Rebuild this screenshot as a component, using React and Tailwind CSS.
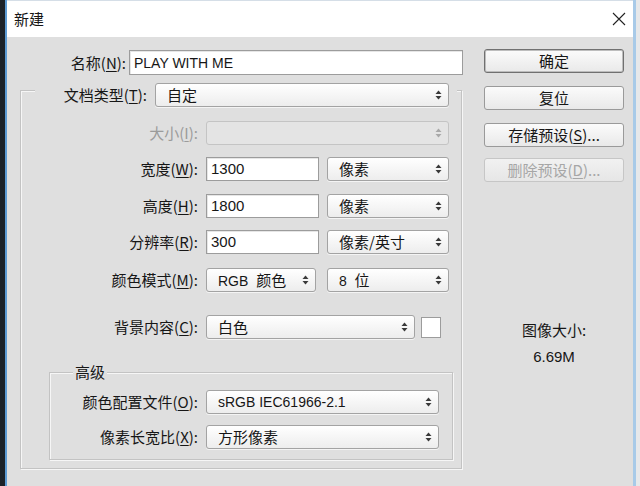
import React from "react";

const BG = "bg-[#dfdfdf]";

function Arrows({ disabled }) {
  const c = disabled ? "#a8a8a8" : "#3a3a3a";
  return (
    <svg width="7" height="10" viewBox="0 0 7 10" className="shrink-0">
      <path d="M3.5 0.5 L6.5 4 L0.5 4 Z" fill={c} />
      <path d="M3.5 9.5 L6.5 6 L0.5 6 Z" fill={c} />
    </svg>
  );
}

function C({ children }) {
  return (
    <span className="font-['Noto_Sans_CJK_SC',sans-serif] text-[15px] leading-[18px]">{children}</span>
  );
}

function Select({ className, children, disabled }) {
  return (
    <div
      className={
        "flex h-[24px] items-center justify-between rounded-[3px] border pl-[11px] pr-[6px] " +
        (disabled
          ? "border-[#c4c4c4] bg-[#e4e4e4] "
          : "border-[#a3a3a3] bg-gradient-to-b from-white to-[#ededed] shadow-[0_1px_0_#f4f4f4] ") +
        className
      }
    >
      <span className="whitespace-nowrap leading-[18px]">{children}</span>
      <Arrows disabled={disabled} />
    </div>
  );
}

function Input({ className, children }) {
  return (
    <div
      className={
        "flex h-[24px] items-center border border-[#9c9c9c] bg-white pl-[4px] shadow-[inset_1px_1px_0_#e6e6e6] " +
        className
      }
    >
      <span className="leading-[18px]">{children}</span>
    </div>
  );
}

function M({ c }) {
  return <span className="underline underline-offset-2 decoration-1">{c}</span>;
}

function Label({ className, cn, m, muted }) {
  return (
    <span
      className={
        "whitespace-nowrap text-right font-['Noto_Sans_CJK_SC',sans-serif] text-[15px] leading-[18px] " +
        (muted ? "text-[#9b9b9b] " : "") +
        className
      }
    >
      {cn}(<M c={m} />):
    </span>
  );
}

function Btn({ children, primary, disabled, className }) {
  return (
    <div
      className={
        "flex h-[24px] w-[140px] items-center justify-center rounded-[3px] font-['Noto_Sans_CJK_SC',sans-serif] text-[15px] " +
        (primary
          ? "border border-[#707070] bg-gradient-to-b from-[#fbfbfb] to-[#e9e9e9] shadow-[inset_0_0_0_1px_#bdbdbd] "
          : disabled
          ? "border border-[#c6c6c6] bg-gradient-to-b from-[#f1f1f1] to-[#e6e6e6] text-[#a6a6a6] "
          : "border border-[#9a9a9a] bg-gradient-to-b from-[#fbfbfb] to-[#e9e9e9] ") +
        className
      }
    >
      <span className="whitespace-nowrap leading-[18px]">{children}</span>
    </div>
  );
}

export default function App() {
  return (
    <div className="flex h-[486px] w-[640px] overflow-hidden font-['Liberation_Sans','Noto_Sans_CJK_SC',sans-serif] text-[14px] text-[#161616]">
      <div className="w-[5px] bg-[#1c2229]" />
      <div className={"flex w-[631px] flex-col border-l-2 border-r-[3px] border-l-[#5d9bd4] border-r-[#a8cae8] " + BG}>
        {/* title bar */}
        <div className="flex h-[37px] items-center justify-between border-t border-t-[#d5dee7] bg-white pl-[7px] pr-[7px]">
          <C>新建</C>
          <svg width="14" height="14" viewBox="0 0 14 14">
            <path d="M1 1 L13 13 M13 1 L1 13" stroke="#222" strokeWidth="1.1" />
          </svg>
        </div>

        {/* body */}
        <div className="flex flex-1">
          {/* left column */}
          <div className="flex w-[477px] flex-col">
            <div className="mt-[13px] flex h-[25px] items-center">
              <Label className="w-[119px]" cn="名称" m="N" />
              <Input className="ml-[3px] h-[25px] w-[334px]">PLAY WITH ME</Input>
            </div>

            {/* outer group */}
            <div className="ml-[13px] mt-[15px] flex w-[442px] flex-col border border-[#c3c3c3] pb-[8px] shadow-[inset_1px_1px_0_#f6f6f6,1px_1px_0_#f6f6f6]">
              <div className={"-mt-[8px] ml-[14px] flex h-[24px] w-[422px] items-center pr-[8px] " + BG}>
                <Label className="w-[112px]" cn="文档类型" m="T" />
                <Select className="ml-[8px] w-[294px]">
                  <C>自定</C>
                </Select>
              </div>

              <div className="mt-[14px] flex h-[24px] items-center">
                <Label className="w-[177px]" cn="大小" m="I" muted />
                <Select className="ml-[8px] w-[243px]" disabled />
              </div>

              <div className="mt-[12px] flex h-[24px] items-center">
                <Label className="w-[177px]" cn="宽度" m="W" />
                <Input className="ml-[8px] w-[113px] text-[15px]">1300</Input>
                <Select className="ml-[8px] w-[122px]">
                  <C>像素</C>
                </Select>
              </div>

              <div className="mt-[13px] flex h-[24px] items-center">
                <Label className="w-[177px]" cn="高度" m="H" />
                <Input className="ml-[8px] w-[113px] text-[15px]">1800</Input>
                <Select className="ml-[8px] w-[122px]">
                  <C>像素</C>
                </Select>
              </div>

              <div className="mt-[12px] flex h-[24px] items-center">
                <Label className="w-[177px]" cn="分辨率" m="R" />
                <Input className="ml-[8px] w-[113px] text-[15px]">300</Input>
                <Select className="ml-[8px] w-[122px]">
                  <C>像素/英寸</C>
                </Select>
              </div>

              <div className="mt-[14px] flex h-[24px] items-center">
                <Label className="w-[177px]" cn="颜色模式" m="M" />
                <Select className="ml-[8px] w-[110px]">
                  RGB&nbsp; <C>颜色</C>
                </Select>
                <Select className="ml-[11px] w-[122px]">
                  8&nbsp; <C>位</C>
                </Select>
              </div>

              <div className="mt-[23px] flex h-[24px] items-center">
                <Label className="w-[177px]" cn="背景内容" m="C" />
                <Select className="ml-[8px] w-[209px]">
                  <C>白色</C>
                </Select>
                <div className="ml-[6px] h-[21px] w-[20px] border border-[#9c9c9c] bg-white" />
              </div>

              {/* inner group */}
              <div className="ml-[28px] mt-[33px] flex w-[404px] flex-col border border-[#c3c3c3] pb-[10px] shadow-[inset_1px_1px_0_#f6f6f6,1px_1px_0_#f6f6f6]">
                <div className={"-mt-[10px] ml-[23px] flex h-[18px] w-fit items-center px-[2px] " + BG}>
                  <C>高级</C>
                </div>
                <div className="mt-[9px] flex h-[24px] items-center">
                  <Label className="w-[148px]" cn="颜色配置文件" m="O" />
                  <Select className="ml-[8px] w-[233px]">sRGB IEC61966-2.1</Select>
                </div>
                <div className="mt-[11px] flex h-[24px] items-center">
                  <Label className="w-[148px]" cn="像素长宽比" m="X" />
                  <Select className="ml-[8px] w-[233px]">
                    <C>方形像素</C>
                  </Select>
                </div>
              </div>
            </div>
          </div>

          {/* right column */}
          <div className="flex w-[140px] flex-col items-center">
            <Btn primary className="mt-[12px]">确定</Btn>
            <Btn className="mt-[13px]">复位</Btn>
            <Btn className="mt-[13px]">
              存储预设(<M c="S" />)...
            </Btn>
            <Btn disabled className="mt-[11px]">
              删除预设(<M c="D" />)...
            </Btn>
            <div className="mt-[139px] flex h-[18px] items-center">
              <C>图像大小:</C>
            </div>
            <div className="mt-[9px] text-[15px] leading-[18px]">6.69M</div>
          </div>
        </div>
      </div>
      <div className="flex-1 bg-[#e6e8ea]" />
    </div>
  );
}
